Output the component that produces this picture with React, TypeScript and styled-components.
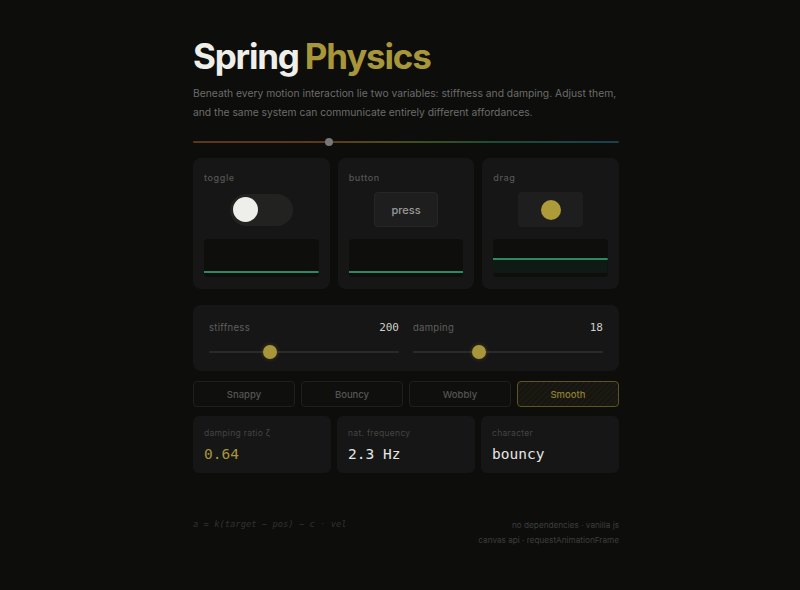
import React from "react";
import styled, { createGlobalStyle } from "styled-components";

const Global = createGlobalStyle`
  html, body { margin: 0; padding: 0; background: #0d0d0c; }
  body { font-family: Inter, "Noto Sans", sans-serif; -webkit-font-smoothing: antialiased; }
`;

const Page = styled.div`
  min-height: 590px;
  padding: 36px 0 0 12px;
  box-sizing: border-box;
`;

const Column = styled.div`
  width: 426px;
  margin: 0 auto;
  display: flex;
  flex-direction: column;
`;

const Title = styled.h1`
  margin: 0;
  font-size: 35px;
  font-weight: 700;
  letter-spacing: -1.2px;
  word-spacing: -1px;
  line-height: 40px;
  color: #efefea;
`;

const Accent = styled.span`
  color: #a8963b;
`;

const Lead = styled.p`
  margin: 8px 0 0;
  font-size: 10.3px;
  line-height: 19px;
  color: #6c6c6a;
  letter-spacing: 0;
`;

const Rail = styled.div`
  position: relative;
  margin-top: 19px;
  height: 2px;
  border-radius: 1px;
  background: linear-gradient(to right, #5e3420 0%, #5a3a1f 30%, #4e4a1e 45%, #3a4e22 55%, #1f4a38 72%, #1c3f4c 100%);
`;

const RailDot = styled.div`
  position: absolute;
  top: -3px;
  left: 132px;
  width: 8px;
  height: 8px;
  border-radius: 50%;
  background: #777;
`;

const DemoRow = styled.div`
  margin-top: 15px;
  display: grid;
  grid-template-columns: repeat(3, 1fr);
  gap: 8px;
`;

const DemoCard = styled.div`
  background: #161616;
  border-radius: 8px;
  height: 131px;
  padding: 14px 11px 12px;
  box-sizing: border-box;
  display: flex;
  flex-direction: column;
`;

const SmallLabel = styled.div`
  font-size: 9px;
  font-weight: 500;
  letter-spacing: 0.6px;
  color: #555553;
  line-height: 11px;
`;

const Stage = styled.div`
  height: 42px;
  display: flex;
  align-items: center;
  justify-content: center;
  margin-top: 7px;
`;

const Track = styled.div`
  width: 63px;
  height: 32px;
  border-radius: 16px;
  background: #222221;
  display: flex;
  align-items: center;
  padding: 0 0 0 3px;
  box-sizing: border-box;
`;

const Knob = styled.div`
  width: 25px;
  height: 25px;
  border-radius: 50%;
  background: #eeeeea;
`;

const PressButton = styled.div`
  width: 64px;
  height: 35px;
  border-radius: 4px;
  background: #1e1e1e;
  border: 1px solid #262626;
  box-sizing: border-box;
  display: flex;
  align-items: center;
  justify-content: center;
  font-size: 11px;
  font-weight: 500;
  color: #9a9a98;
`;

const DragPad = styled.div`
  width: 65px;
  height: 35px;
  border-radius: 4px;
  background: #1e1e1e;
  display: flex;
  align-items: center;
  justify-content: center;
`;

const Ball = styled.div`
  width: 20px;
  height: 20px;
  border-radius: 50%;
  background: #ad9a38;
`;

const Graph = styled.div`
  margin-top: 10px;
  height: 40px;
  border-radius: 4px;
  background: #0e0e0d;
  overflow: hidden;
`;

const PanelRow = styled.div`
  margin-top: 16px;
  background: #161616;
  border-radius: 8px;
  padding: 16px 16px 0;
  height: 66px;
  box-sizing: border-box;
  display: grid;
  grid-template-columns: 1fr 1fr;
  gap: 14px;
`;

const SliderBlock = styled.div`
  display: flex;
  flex-direction: column;
`;

const SliderHead = styled.div`
  display: flex;
  justify-content: space-between;
  align-items: baseline;
`;

const SliderName = styled.span`
  font-size: 9.5px;
  color: #5f5f5d;
  letter-spacing: 0.3px;
`;

const SliderValue = styled.span`
  font-family: "DejaVu Sans Mono", monospace;
  font-size: 11px;
  color: #cfcfcb;
`;

const SliderTrack = styled.div`
  position: relative;
  margin-top: 17px;
  height: 2px;
  background: #2a2a29;
  border-radius: 1px;
`;

const SliderThumb = styled.div`
  position: absolute;
  top: -6px;
  width: 14px;
  height: 14px;
  margin-left: -7px;
  border-radius: 50%;
  background: #a8963b;
  box-shadow: 0 0 4px rgba(168, 150, 59, 0.35);
`;

const Presets = styled.div`
  margin-top: 10px;
  display: grid;
  grid-template-columns: repeat(4, 1fr);
  gap: 6px;
`;

const Preset = styled.div<{ $active?: boolean }>`
  height: 26px;
  border-radius: 4px;
  box-sizing: border-box;
  border: 1px solid ${(p) => (p.$active ? "#5e5322" : "#1f1f1e")};
  background: ${(p) =>
    p.$active
      ? "repeating-linear-gradient(135deg, #16150f 0 2px, #1b1a12 2px 4px)"
      : "#0f0f0e"};
  display: flex;
  align-items: center;
  justify-content: center;
  font-size: 9.5px;
  font-weight: 500;
  color: ${(p) => (p.$active ? "#8e7f33" : "#555553")};
`;

const Stats = styled.div`
  margin-top: 9px;
  display: grid;
  grid-template-columns: repeat(3, 1fr);
  gap: 6px;
`;

const StatCard = styled.div`
  height: 57px;
  border-radius: 6px;
  background: #161616;
  padding: 12px 11px 0;
  box-sizing: border-box;
`;

const StatLabel = styled.div`
  font-size: 8.5px;
  color: #454543;
  letter-spacing: 0.3px;
  line-height: 10px;
`;

const StatValue = styled.div<{ $gold?: boolean }>`
  margin-top: 7px;
  font-family: "DejaVu Sans Mono", monospace;
  font-size: 14.5px;
  line-height: 18px;
  color: ${(p) => (p.$gold ? "#a8963b" : "#e6e6e2")};
`;

const Footer = styled.div`
  margin-top: 45px;
  display: flex;
  justify-content: space-between;
  align-items: flex-start;
`;

const Formula = styled.div`
  font-family: "DejaVu Sans Mono", monospace;
  font-style: italic;
  font-size: 8.8px;
  color: #323231;
  padding-top: 1px;
`;

const Credits = styled.div`
  text-align: right;
  font-size: 8.2px;
  line-height: 15px;
  color: #3e3e3c;
`;

function Curve({ y, fill }: { y: number; fill?: boolean }) {
  return (
    <svg width="100%" height="40" viewBox="0 0 115 40" preserveAspectRatio="none">
      {fill && <rect x="0" y={y} width="115" height={34 - y} fill="#0f1a14" />}
      <line x1="0" x2="115" y1={y} y2={y} stroke="#2c8a62" strokeWidth="2" />
    </svg>
  );
}

export default function App() {
  return (
    <>
      <Global />
      <Page>
        <Column>
          <Title>
            Spring <Accent>Physics</Accent>
          </Title>
          <Lead>
            Beneath every motion interaction lie two variables: stiffness and damping. Adjust them,
            and the same system can communicate entirely different affordances.
          </Lead>
          <Rail>
            <RailDot />
          </Rail>

          <DemoRow>
            <DemoCard>
              <SmallLabel>toggle</SmallLabel>
              <Stage>
                <Track>
                  <Knob />
                </Track>
              </Stage>
              <Graph>
                <Curve y={33} />
              </Graph>
            </DemoCard>
            <DemoCard>
              <SmallLabel>button</SmallLabel>
              <Stage>
                <PressButton>press</PressButton>
              </Stage>
              <Graph>
                <Curve y={33} />
              </Graph>
            </DemoCard>
            <DemoCard>
              <SmallLabel>drag</SmallLabel>
              <Stage>
                <DragPad>
                  <Ball />
                </DragPad>
              </Stage>
              <Graph>
                <Curve y={20} fill />
              </Graph>
            </DemoCard>
          </DemoRow>

          <PanelRow>
            <SliderBlock>
              <SliderHead>
                <SliderName>stiffness</SliderName>
                <SliderValue>200</SliderValue>
              </SliderHead>
              <SliderTrack>
                <SliderThumb style={{ left: "32%" }} />
              </SliderTrack>
            </SliderBlock>
            <SliderBlock>
              <SliderHead>
                <SliderName>damping</SliderName>
                <SliderValue>18</SliderValue>
              </SliderHead>
              <SliderTrack>
                <SliderThumb style={{ left: "34.5%" }} />
              </SliderTrack>
            </SliderBlock>
          </PanelRow>

          <Presets>
            <Preset>Snappy</Preset>
            <Preset>Bouncy</Preset>
            <Preset>Wobbly</Preset>
            <Preset $active>Smooth</Preset>
          </Presets>

          <Stats>
            <StatCard>
              <StatLabel>damping ratio ζ</StatLabel>
              <StatValue $gold>0.64</StatValue>
            </StatCard>
            <StatCard>
              <StatLabel>nat. frequency</StatLabel>
              <StatValue>2.3 Hz</StatValue>
            </StatCard>
            <StatCard>
              <StatLabel>character</StatLabel>
              <StatValue>bouncy</StatValue>
            </StatCard>
          </Stats>

          <Footer>
            <Formula>a = k(target − pos) − c · vel</Formula>
            <Credits>
              <div>no dependencies · vanilla js</div>
              <div>canvas api · requestAnimationFrame</div>
            </Credits>
          </Footer>
        </Column>
      </Page>
    </>
  );
}
